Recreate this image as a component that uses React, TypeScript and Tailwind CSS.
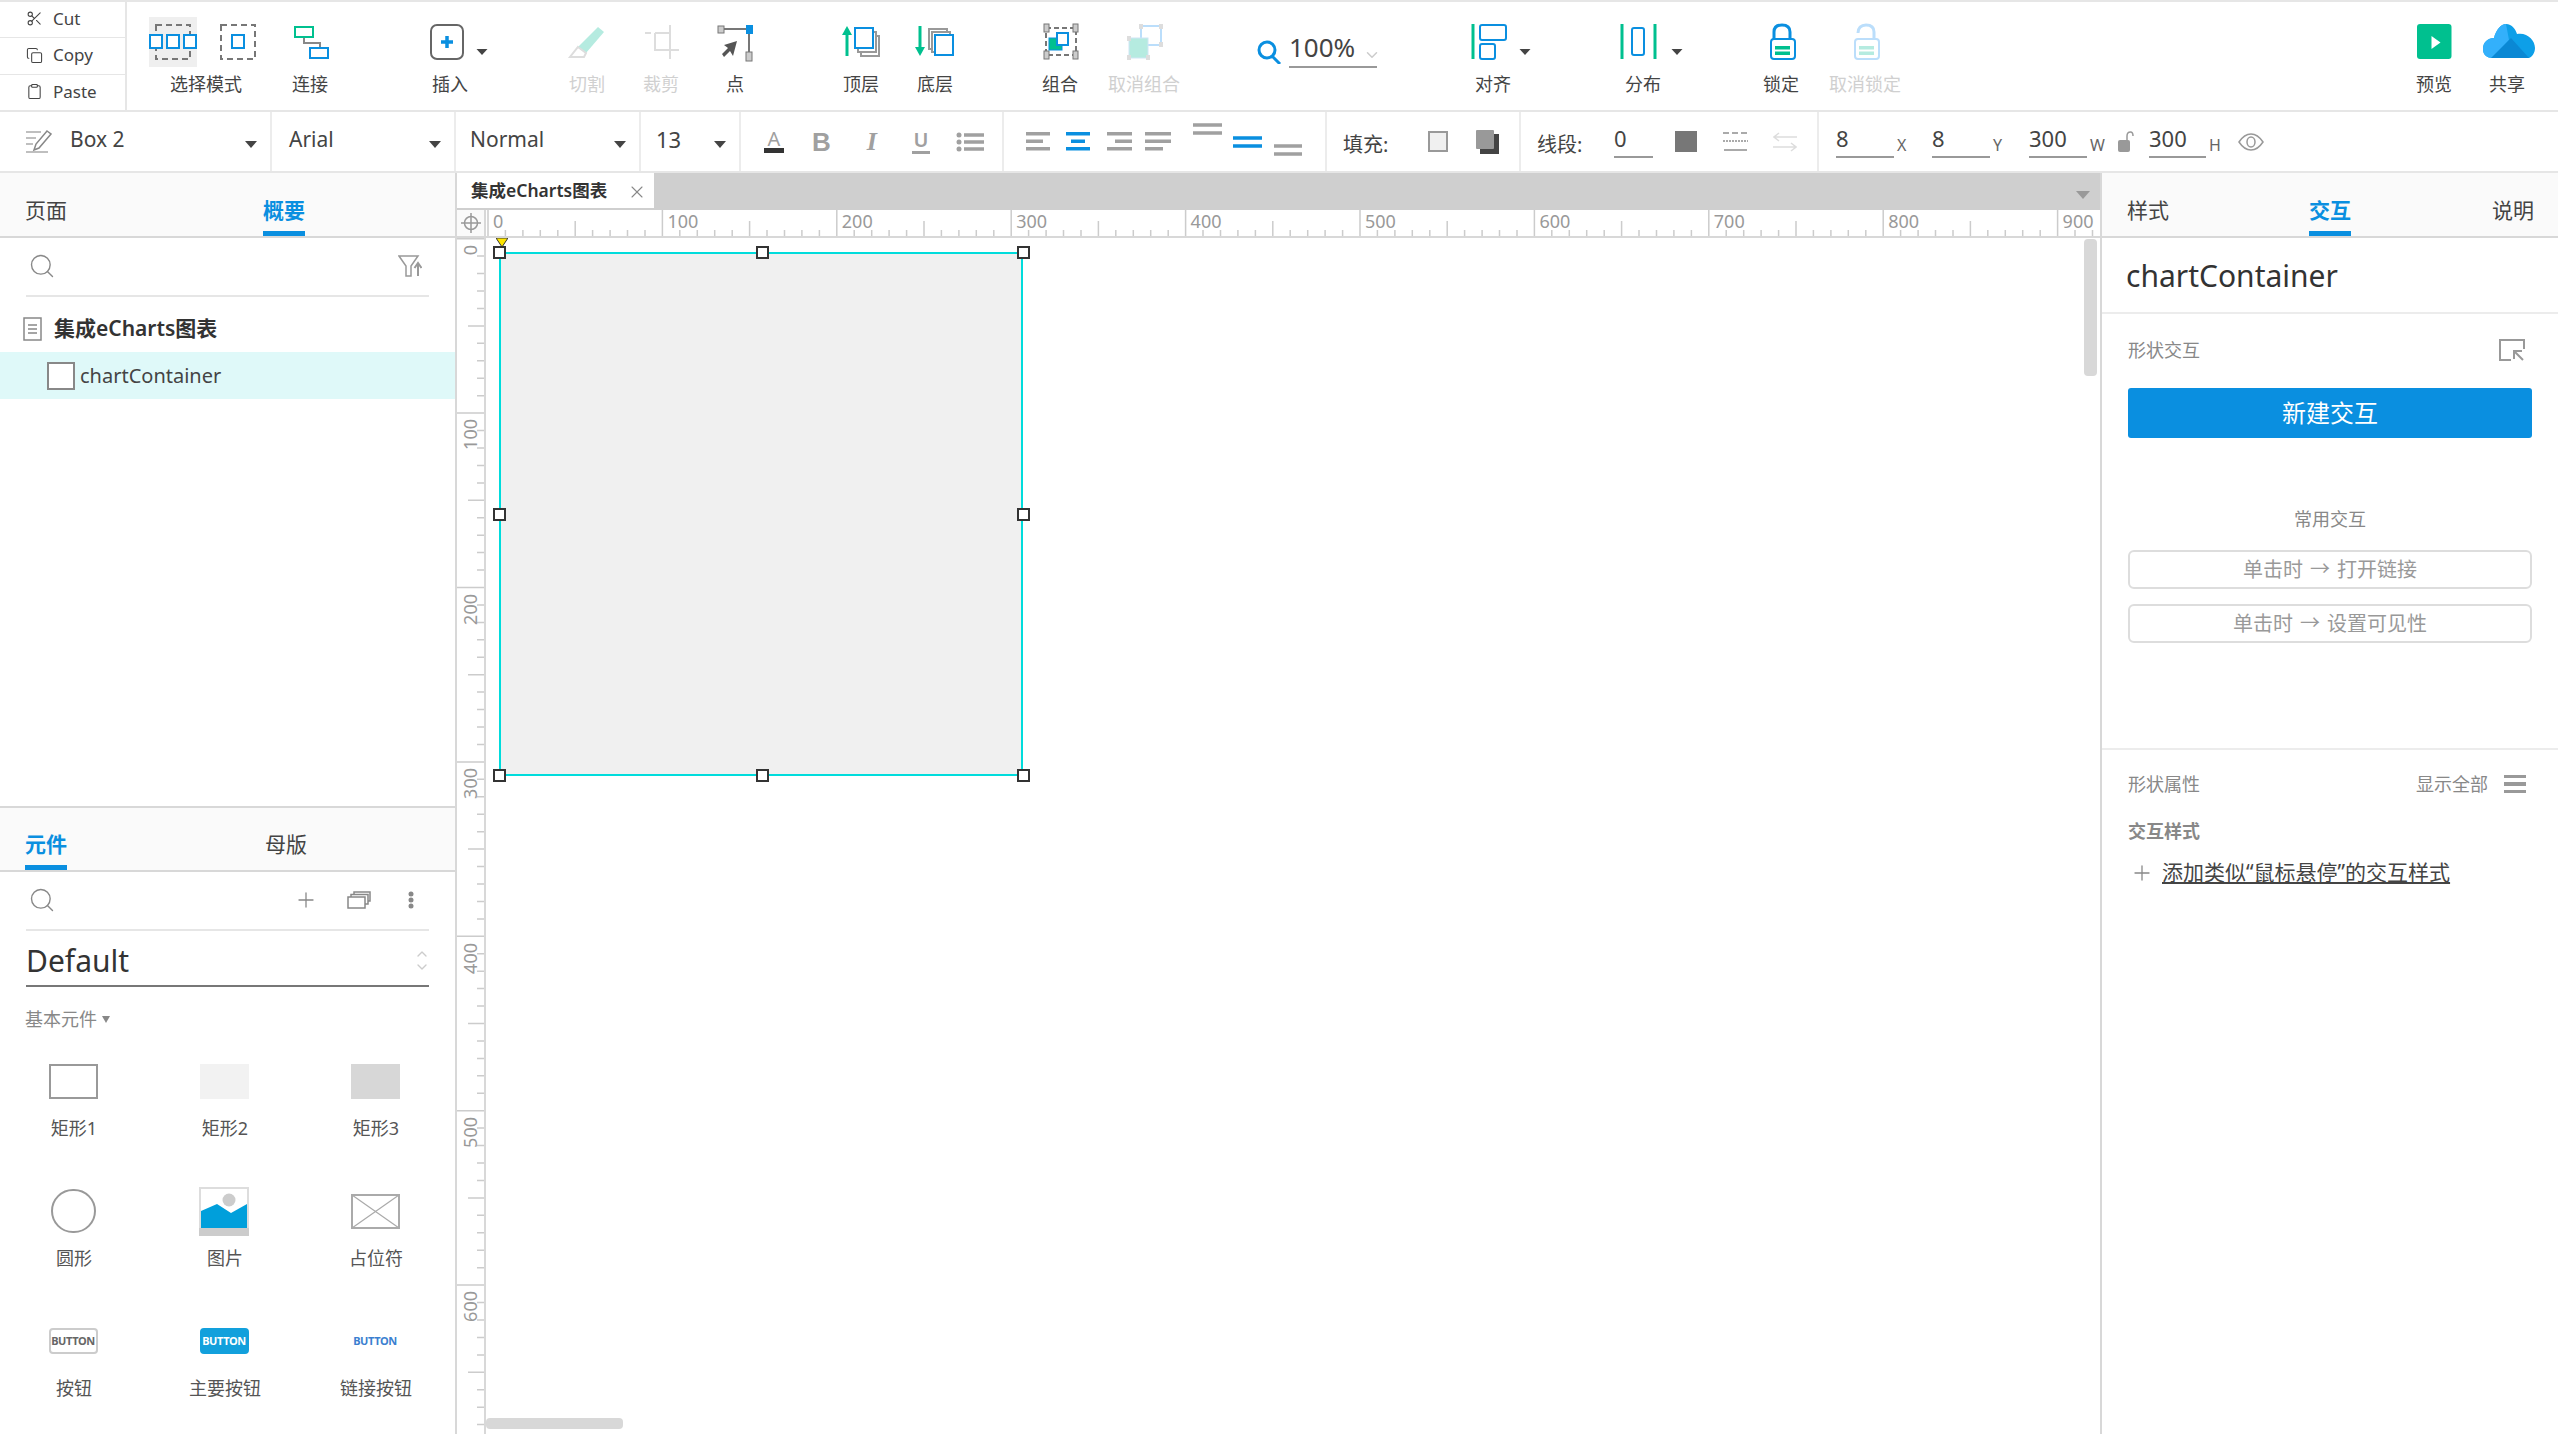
import { ReactNode } from "react";
import { Scissors, Copy, Clipboard, Search, Plus, X, ChevronUp, ChevronDown } from "lucide-react";

const BLUE = "#0a8fe0";
const GREEN = "#00c08f";

const Tri = ({ x, y = 28 }: { x: number; y?: number }) => (
  <polygon points={`${x - 5.5},${y - 3} ${x + 5.5},${y - 3} ${x},${y + 3}`} fill="#444" />
);

const Caret = ({ className = "" }: { className?: string }) => (
  <svg width="12" height="7" viewBox="0 0 12 7" className={className}>
    <polygon points="0,0 12,0 6,7" fill="#444" />
  </svg>
);

function Tool({ icon, label, className, off }: { icon: ReactNode; label: string; className: string; off?: boolean }) {
  return (
    <div className={`flex shrink-0 flex-col items-center pt-[22px] ${className}`}>
      <svg width="72" height="38" viewBox="0 0 72 38" className="overflow-visible">
        {icon}
      </svg>
      <div className={`mt-[10px] whitespace-nowrap text-[18px] leading-[24px] ${off ? "text-[#d0d0d0]" : "text-[#444]"}`}>{label}</div>
    </div>
  );
}

function TopBar() {
  return (
    <div className="flex h-[110px] border-b-2 border-[#e6e6e6] bg-white">
      <div className="flex w-[127px] shrink-0 flex-col border-r-2 border-[#e6e6e6] text-[17px] text-[#444]">
        <div className="flex h-[36px] items-center gap-[10px] border-b border-[#e6e6e6] pb-[2px] pl-[26px]">
          <Scissors size={17} strokeWidth={1.5} />
          Cut
        </div>
        <div className="flex h-[37px] items-center gap-[10px] border-b border-[#e6e6e6] pb-[2px] pl-[26px]">
          <Copy size={17} strokeWidth={1.5} />
          Copy
        </div>
        <div className="flex flex-1 items-center gap-[10px] pb-[2px] pl-[26px]">
          <Clipboard size={17} strokeWidth={1.5} />
          Paste
        </div>
      </div>

      <div className="ml-[22px] flex w-[114px] shrink-0 flex-col pt-[22px]">
        <svg width="106" height="38" viewBox="0 0 106 38" className="overflow-visible">
          <rect x="0" y="-7" width="48" height="50" fill="#efefef" />
          <rect x="7" y="1" width="34" height="34" fill="none" stroke="#777" strokeWidth="2" strokeDasharray="6 4" />
          <rect x="1" y="11" width="12" height="13" fill="#fff" stroke={BLUE} strokeWidth="2" />
          <rect x="18" y="11" width="12" height="13" fill="#fff" stroke={BLUE} strokeWidth="2" />
          <rect x="35" y="11" width="12" height="13" fill="#fff" stroke={BLUE} strokeWidth="2" />
          <rect x="72" y="1" width="34" height="34" fill="none" stroke="#777" strokeWidth="2" strokeDasharray="6 4" />
          <rect x="83" y="11" width="12" height="13" fill="#fff" stroke={BLUE} strokeWidth="2" />
        </svg>
        <div className="mt-[10px] text-center text-[18px] leading-[24px] text-[#444]">选择模式</div>
      </div>

      <Tool
        label="连接"
        className="ml-[11px] w-[72px]"
        icon={
          <>
            <path d="M30 12V19H46V24" fill="none" stroke="#888" strokeWidth="2" />
            <rect x="21" y="3" width="18" height="10" fill="#fff" stroke={GREEN} strokeWidth="2" />
            <rect x="36" y="24" width="18" height="10" fill="#fff" stroke={BLUE} strokeWidth="2" />
          </>
        }
      />
      <Tool
        label="插入"
        className="ml-[68px] w-[72px]"
        icon={
          <>
            <rect x="17" y="1" width="32" height="34" rx="6" fill="none" stroke="#666" strokeWidth="2" />
            <path d="M33 12V24M27 18H39" stroke={BLUE} strokeWidth="3.5" />
            <Tri x={68} />
          </>
        }
      />
      <Tool
        label="切割"
        off
        className="ml-[65px] w-[72px]"
        icon={
          <>
            <polygon points="47,3 53,8 35,29 27,23" fill="#b5ebe0" />
            <polygon points="27,23 35,29 33,33 19,33" fill="#fff" stroke="#ddd" strokeWidth="2" />
          </>
        }
      />
      <Tool
        label="裁剪"
        off
        className="ml-[2px] w-[72px]"
        icon={<path d="M20 9H26M30 9V26H54M30 9H45M45 1V35" fill="none" stroke="#ddd" strokeWidth="2" />}
      />
      <Tool
        label="点"
        className="ml-[2px] w-[72px]"
        icon={
          <>
            <path d="M22 5H50V32" fill="none" stroke="#777" strokeWidth="2" />
            <rect x="19" y="2" width="6" height="7" fill="#ccc" stroke="#777" />
            <rect x="47" y="1" width="7" height="9" fill={BLUE} />
            <rect x="47" y="28" width="6" height="9" fill="#ccc" stroke="#777" />
            <polygon points="38,17 34,32 31,27 25,33 23,30 29,24 25,21" fill="#555" />
          </>
        }
      />
      <Tool
        label="顶层"
        className="ml-[54px] w-[72px]"
        icon={
          <>
            <path d="M22 32V8" stroke={GREEN} strokeWidth="3" />
            <polygon points="17,11 27,11 22,2" fill={GREEN} />
            <rect x="36" y="12" width="18" height="20" fill="#fff" stroke="#999" strokeWidth="2" />
            <rect x="33" y="8" width="18" height="20" fill="#fff" stroke="#999" strokeWidth="2" />
            <rect x="30" y="4" width="18" height="20" fill="#fff" stroke={BLUE} strokeWidth="2" />
          </>
        }
      />
      <Tool
        label="底层"
        className="ml-[2px] w-[72px]"
        icon={
          <>
            <path d="M21 2V26" stroke={GREEN} strokeWidth="3" />
            <polygon points="16,23 26,23 21,32" fill={GREEN} />
            <rect x="30" y="5" width="18" height="20" fill="#fff" stroke="#999" strokeWidth="2" />
            <rect x="33" y="8" width="18" height="20" fill="#fff" stroke="#999" strokeWidth="2" />
            <rect x="36" y="11" width="18" height="20" fill="#fff" stroke={BLUE} strokeWidth="2" />
          </>
        }
      />
      <Tool
        label="组合"
        className="ml-[53px] w-[72px]"
        icon={
          <>
            <rect x="22" y="4" width="30" height="27" fill="none" stroke="#777" strokeWidth="2" strokeDasharray="5 3" />
            <rect x="20" y="0" width="5" height="8" fill="#ccc" stroke="#777" />
            <rect x="49" y="0" width="5" height="8" fill="#ccc" stroke="#777" />
            <rect x="20" y="27" width="5" height="8" fill="#ccc" stroke="#777" />
            <rect x="49" y="27" width="5" height="8" fill="#ccc" stroke="#777" />
            <rect x="25" y="14" width="13" height="12" fill={GREEN} stroke={BLUE} />
            <rect x="33" y="9" width="11" height="12" fill="#fff" stroke={BLUE} strokeWidth="2" />
          </>
        }
      />
      <Tool
        label="取消组合"
        off
        className="ml-[12px] w-[72px]"
        icon={
          <>
            <rect x="33" y="2" width="20" height="19" fill="#fff" stroke="#bbdefb" strokeWidth="2" />
            <rect x="21" y="14" width="19" height="20" fill="#b5ebe0" stroke="#cfe6f5" />
            <rect x="31" y="0" width="4" height="5" fill="#ddd" />
            <rect x="51" y="0" width="4" height="5" fill="#ddd" />
            <rect x="51" y="18" width="4" height="5" fill="#ddd" />
            <rect x="19" y="12" width="4" height="5" fill="#ddd" />
            <rect x="19" y="31" width="4" height="5" fill="#ddd" />
            <rect x="38" y="31" width="4" height="5" fill="#ddd" />
          </>
        }
      />

      <div className="relative ml-[76px] flex h-[108px] w-[121px] shrink-0 items-start pt-[27px]">
        <svg width="26" height="24" viewBox="0 0 26 24" className="mt-[11px]">
          <circle cx="11" cy="10" r="8" fill="none" stroke={BLUE} strokeWidth="3" />
          <path d="M16 16L24 24" stroke={BLUE} strokeWidth="3" />
        </svg>
        <div className="ml-[7px] flex h-[39px] w-[88px] border-b-2 border-[#999] text-[26px] leading-[36px] text-[#444]">100%</div>
        <ChevronDown size={18} strokeWidth={2} className="absolute left-[107px] top-[44px] text-[#ccc]" />
      </div>

      <Tool
        label="对齐"
        className="ml-[80px] w-[72px]"
        icon={
          <>
            <path d="M16 0V35" stroke={GREEN} strokeWidth="3" />
            <rect x="23" y="1" width="26" height="15" rx="2" fill="none" stroke={BLUE} strokeWidth="2" />
            <rect x="23" y="20" width="15" height="15" rx="2" fill="none" stroke={BLUE} strokeWidth="2" />
            <Tri x={68} />
          </>
        }
      />
      <Tool
        label="分布"
        className="ml-[78px] w-[72px]"
        icon={
          <>
            <path d="M15 0V35M48 0V35" stroke={GREEN} strokeWidth="3" />
            <rect x="25" y="4" width="12" height="27" rx="2" fill="none" stroke={BLUE} strokeWidth="2" />
            <Tri x={70} />
          </>
        }
      />
      <Tool
        label="锁定"
        className="ml-[66px] w-[72px]"
        icon={
          <>
            <path d="M29 16V8C29 3 32 1 37 1C42 1 45 3 45 8V16" fill="none" stroke={BLUE} strokeWidth="3" />
            <rect x="26" y="15" width="24" height="20" rx="3" fill="#fff" stroke={BLUE} strokeWidth="2" />
            <rect x="30" y="22" width="15" height="3.5" fill={GREEN} />
            <rect x="30" y="27.5" width="15" height="3.5" fill={GREEN} />
          </>
        }
      />
      <Tool
        label="取消锁定"
        off
        className="ml-[12px] w-[72px]"
        icon={
          <>
            <path d="M29 9C29 4 32 1 37 1C42 1 45 3 45 8V16" fill="none" stroke="#bbdefb" strokeWidth="3" />
            <rect x="26" y="15" width="24" height="20" rx="3" fill="#fff" stroke="#bbdefb" strokeWidth="2" />
            <rect x="30" y="22" width="15" height="3.5" fill="#b5ebe0" />
            <rect x="30" y="27.5" width="15" height="3.5" fill="#b5ebe0" />
          </>
        }
      />

      <Tool
        label="预览"
        className="ml-auto w-[72px]"
        icon={
          <>
            <rect x="19" y="0" width="34.5" height="35" rx="3" fill={GREEN} />
            <polygon points="33.500,12 42.500,18.500 33.500,25" fill="#fff" />
          </>
        }
      />
      <Tool
        label="共享"
        className="ml-[1px] mr-[15px] w-[72px]"
        icon={
          <>
            <path d="M12 25C12 18 17 14 23 14C25 6 30 0 35 0C41 0 45 6 46 10C56 8 64 16 64 24C64 29 61 33 58 34H22C16 34 12 31 12 25Z" fill="#0d9fe8" />
            <path d="M12 25C12 18 17 14 23 14C25 6 30 0 35 0L38 16L22 34C16 34 12 31 12 25Z" fill="#33b0fb" />
            <polygon points="20,34 40,14 58,34" fill="#0a88d4" />
          </>
        }
      />
    </div>
  );
}

const Bars = ({ w, color, mid, midW, lastW }: { w: number; color: string; mid: number; midW: number; lastW?: number }) => (
  <svg width={w} height={19} viewBox={`0 0 ${w} 19`} className="shrink-0">
    <rect x={0} y={0} width={w} height={3.5} fill={color} />
    <rect x={mid} y={7.5} width={midW} height={3.5} fill={color} />
    <rect x={0} y={15} width={lastW ?? w} height={3.5} fill={color} />
  </svg>
);

const Dim = ({ value, tag, w = "w-[58px]", tagW }: { value: string; tag: string; w?: string; tagW: string }) => (
  <div className="flex items-end">
    <div className={`h-[33px] border-b-2 border-[#999] text-[22px] leading-[26px] text-[#444] ${w}`}>{value}</div>
    <div className={`pb-[2px] pl-[3px] text-[16px] leading-[22px] text-[#666] ${tagW}`}>{tag}</div>
  </div>
);

function FormatBar() {
  return (
    <div className="flex h-[61px] border-b-2 border-[#e6e6e6] bg-white text-[20px] text-[#444]">
      <div className="flex w-[272px] shrink-0 items-center border-r-2 border-[#ececec] pl-[26px]">
        <svg width="26" height="24" viewBox="0 0 26 24" fill="none" stroke="#aaa" strokeWidth="1.5">
          <path d="M0 2H15M0 8H10M0 14H7M0 22H22" />
          <path d="M21 1L25 4L13 18L8 20L10 14Z" stroke="#888" />
        </svg>
        <span className="ml-[18px] pb-[4px] text-[21px]">Box 2</span>
        <Caret className="ml-[120px] mt-[5px]" />
      </div>
      <div className="flex w-[184px] shrink-0 items-center border-r-2 border-[#ececec] pl-[17px]">
        <span className="w-[141px] pb-[4px] text-[21px]">Arial</span>
        <Caret className="mt-[5px] -ml-[1px]" />
      </div>
      <div className="flex w-[185px] shrink-0 items-center border-r-2 border-[#ececec] pl-[14px]">
        <span className="w-[147px] pb-[4px] text-[21px]">Normal</span>
        <Caret className="mt-[5px] -ml-[3px]" />
      </div>
      <div className="flex w-[100px] shrink-0 items-center border-r-2 border-[#ececec] pl-[15px]">
        <span className="w-[58px] pb-[4px] text-[22px]">13</span>
        <Caret className="mt-[5px]" />
      </div>

      <div className="flex w-[263px] shrink-0 items-center border-r-2 border-[#ececec] pl-[23px] text-[#a0a0a0]">
        <div className="flex w-[20px] flex-col items-center">
          <span className="text-[20px] leading-[18px]">A</span>
          <div className="h-[5px] w-[20px] bg-[#333]" />
        </div>
        <b className="ml-[28px] font-['Liberation_Sans',sans-serif] text-[26px] leading-[26px]">B</b>
        <b className="ml-[36px] font-['Liberation_Serif',serif] text-[26px] italic leading-[26px]">I</b>
        <div className="ml-[35px] flex w-[18px] flex-col items-center">
          <span className="text-[20px] font-semibold leading-[20px]">U</span>
          <div className="mt-[1px] h-[3px] w-[18px] bg-[#a0a0a0]" />
        </div>
        <svg width="28" height="20" viewBox="0 0 28 20" className="ml-[26px]">
          <path d="M8 3H28M8 10H28M8 17H28" stroke="#a0a0a0" strokeWidth="3.5" />
          <circle cx="3" cy="3" r="2.5" fill="#a0a0a0" />
          <circle cx="3" cy="10" r="2.5" fill="#a0a0a0" />
          <circle cx="3" cy="17" r="2.5" fill="#a0a0a0" />
        </svg>
      </div>

      <div className="flex w-[323px] shrink-0 items-center border-r-2 border-[#ececec] pl-[22px]">
        <Bars w={24} color="#a0a0a0" mid={0} midW={17} />
        <div className="ml-[16px]">
          <Bars w={24} color={BLUE} mid={5} midW={14} />
        </div>
        <div className="ml-[17px]">
          <Bars w={25} color="#a0a0a0" mid={8} midW={17} />
        </div>
        <div className="ml-[13px]">
          <Bars w={26} color="#a0a0a0" mid={0} midW={26} lastW={18} />
        </div>
        <svg width="29" height="27" viewBox="0 0 29 27" className="ml-[22px] mb-[11px] shrink-0">
          <path d="M0 2H29M0 10H29" stroke="#a0a0a0" strokeWidth="3.5" />
        </svg>
        <svg width="29" height="12" viewBox="0 0 29 12" className="ml-[11px] shrink-0">
          <path d="M0 2H29M0 10H29" stroke={BLUE} strokeWidth="3.5" />
        </svg>
        <svg width="28" height="12" viewBox="0 0 28 12" className="ml-[12px] mt-[16px] shrink-0">
          <path d="M0 2H28M0 10H28" stroke="#a0a0a0" strokeWidth="3.5" />
        </svg>
      </div>

      <div className="flex w-[194px] shrink-0 items-center border-r-2 border-[#ececec] pl-[16px]">
        <span className="w-[85px] pt-[6px]">填充:</span>
        <div className="h-[21px] w-[20px] border-2 border-[#999] bg-[#f0f0f0]" />
        <svg width="23" height="24" viewBox="0 0 23 24" className="ml-[28px]">
          <rect x="4" y="4" width="19" height="20" fill="#444" />
          <rect x="0" y="0" width="18" height="19" rx="1" fill="#999" />
        </svg>
      </div>

      <div className="flex w-[298px] shrink-0 items-center border-r-2 border-[#ececec] pl-[16px]">
        <span className="w-[77px] pt-[6px]">线段:</span>
        <div className="h-[33px] w-[39px] border-b-2 border-[#999] text-[22px] leading-[26px]">0</div>
        <div className="ml-[22px] h-[21px] w-[22px] bg-[#777]" />
        <svg width="25" height="20" viewBox="0 0 25 20" fill="none" className="ml-[26px]">
          <path d="M0 1H25" stroke="#aaa" strokeWidth="2" strokeDasharray="6 3" />
          <path d="M0 9H25" stroke="#aaa" strokeWidth="2" strokeDasharray="2 1" />
          <path d="M1 18H24" stroke="#aaa" strokeWidth="2" />
        </svg>
        <svg width="24" height="20" viewBox="0 0 24 20" fill="none" stroke="#ddd" strokeWidth="1.5" className="ml-[25px]">
          <path d="M24 5H1M6 1L1 5L6 9" />
          <path d="M0 15H23M18 11L23 15L18 19" />
        </svg>
      </div>

      <div className="flex flex-1 items-center pl-[17px]">
        <Dim value="8" tag="X" tagW="w-[38px]" />
        <Dim value="8" tag="Y" tagW="w-[39px]" />
        <Dim value="300" tag="W" tagW="w-[31px]" />
        <svg width="16" height="21" viewBox="0 0 16 21" className="shrink-0">
          <rect x="0" y="9" width="12" height="12" rx="2" fill="#999" />
          <path d="M9 9V5C9 2 11 1 12.500 1C14 1 15 3 15 5" fill="none" stroke="#999" strokeWidth="1.5" />
        </svg>
        <div className="w-[15px] shrink-0" />
        <Dim value="300" tag="H" w="w-[57px]" tagW="w-[32px]" />
        <svg width="26" height="18" viewBox="0 0 26 18" fill="none" stroke="#999" strokeWidth="1.5">
          <path d="M1 9C5 3 9 1 13 1C17 1 21 3 25 9C21 15 17 17 13 17C9 17 5 15 1 9Z" />
          <ellipse cx="13" cy="9" rx="4" ry="5" />
        </svg>
      </div>
    </div>
  );
}

const PanelTab = ({ label, active, className = "" }: { label: string; active?: boolean; className?: string }) => (
  <div
    className={`flex h-full items-center border-b-[5px] pt-[17px] text-[21px] ${
      active ? "border-[#0a8fe0] font-semibold text-[#0a8fe0]" : "border-transparent text-[#444]"
    } ${className}`}
  >
    {label}
  </div>
);

const Thin = () => <Search size={28} strokeWidth={1.2} className="text-[#888]" />;

function ShapeCell({ label, children }: { label: string; children: ReactNode }) {
  return (
    <div className="flex h-[130px] flex-col items-center">
      <div className="flex h-[50px] items-center justify-center">{children}</div>
      <div className="mt-[10px] pl-[2px] text-[18px] leading-[24px] text-[#555]">{label}</div>
    </div>
  );
}

const BtnIcon = ({ bg, fg, border }: { bg: string; fg: string; border: string }) => (
  <div className={`flex h-[26px] w-[49px] items-center justify-center rounded-[4px] border-2 text-[11px] font-bold tracking-[-0.4px] ${bg} ${fg} ${border}`}>BUTTON</div>
);

function LeftPanel() {
  return (
    <div className="flex w-[457px] shrink-0 flex-col border-r-2 border-[#d8d8d8] bg-white">
      <div className="flex h-[65px] shrink-0 border-b-2 border-[#d8d8d8] bg-[#fafafa] pl-[25px]">
        <PanelTab label="页面" />
        <PanelTab label="概要" active className="ml-[196px]" />
      </div>
      <div className="mx-[26px] flex h-[59px] shrink-0 items-center justify-between border-b-2 border-[#e6e6e6] pb-[2px] pl-[2px]">
        <Thin />
        <svg width="24" height="24" viewBox="0 0 24 24" fill="none" stroke="#999" strokeWidth="1.5" className="mr-[7px]">
          <path d="M1 2H20L13 12V22H8V12Z" />
          <path d="M20 22V10M16.500 14L20 9L23.500 14" strokeWidth="2" />
        </svg>
      </div>
      <div className="mt-[19px] flex h-[26px] items-center pl-[23px]">
        <svg width="19" height="24" viewBox="0 0 19 24" fill="none" stroke="#888" strokeWidth="1.5">
          <rect x="1" y="1" width="17" height="22" />
          <path d="M5 8H14M5 12H14M5 16H14" />
        </svg>
        <span className="ml-[12px] text-[21px] font-semibold text-[#333]">集成eCharts图表</span>
      </div>
      <div className="mt-[10px] flex h-[47px] items-center bg-[#dff9f9] pl-[47px]">
        <div className="h-[28px] w-[28px] border-2 border-[#888] bg-white" />
        <span className="ml-[5px] text-[20px] text-[#444]">chartContainer</span>
      </div>

      <div className="mt-auto flex h-[628px] shrink-0 flex-col border-t-2 border-[#d8d8d8]">
        <div className="flex h-[64px] shrink-0 border-b-2 border-[#d8d8d8] bg-[#fafafa] pl-[25px]">
          <PanelTab label="元件" active />
          <PanelTab label="母版" className="ml-[198px]" />
        </div>
        <div className="mx-[26px] flex h-[59px] shrink-0 items-center border-b-2 border-[#e6e6e6] pb-[2px] pl-[2px]">
          <Thin />
          <Plus size={24} strokeWidth={1.3} className="ml-[238px] text-[#888]" />
          <svg width="24" height="18" viewBox="0 0 24 18" fill="none" stroke="#888" strokeWidth="1.5" className="ml-[29px]">
            <rect x="1" y="6" width="17" height="11" />
            <path d="M4 6V3.500H21V13H18" />
            <path d="M7 3V1H23V10H21" />
          </svg>
          <svg width="6" height="18" viewBox="0 0 6 18" className="ml-[37px]">
            <circle cx="3" cy="3" r="2.500" fill="#888" />
            <circle cx="3" cy="9" r="2.500" fill="#888" />
            <circle cx="3" cy="15" r="2.500" fill="#888" />
          </svg>
        </div>
        <div className="mx-[26px] flex h-[56px] shrink-0 items-center justify-between border-b-2 border-[#777] pt-[4px]">
          <span className="text-[30px] text-[#333]">Default</span>
          <div className="mr-[-1px] flex flex-col items-center text-[#ccc]">
            <ChevronUp size={16} strokeWidth={2} className="-mb-[3px]" />
            <ChevronDown size={16} strokeWidth={2} />
          </div>
        </div>
        <div className="ml-[25px] mt-[20px] flex h-[24px] items-center text-[18px] text-[#888]">
          基本元件
          <svg width="8" height="7" viewBox="0 0 8 7" className="ml-[5px]">
            <polygon points="0,0 8,0 4,7" fill="#888" />
          </svg>
        </div>
        <div className="mt-[25px] grid grid-cols-[146px_156px_146px]">
          <ShapeCell label="矩形1">
            <div className="h-[35px] w-[49px] border-2 border-[#999] bg-white" />
          </ShapeCell>
          <ShapeCell label="矩形2">
            <div className="h-[35px] w-[49px] bg-[#f2f2f2]" />
          </ShapeCell>
          <ShapeCell label="矩形3">
            <div className="h-[35px] w-[49px] bg-[#d7d7d7]" />
          </ShapeCell>
          <ShapeCell label="圆形">
            <div className="h-[44px] w-[45px] rounded-full border-2 border-[#999] bg-white" />
          </ShapeCell>
          <ShapeCell label="图片">
            <svg width="50" height="49" viewBox="0 0 50 49">
              <rect width="50" height="49" fill="#ddd" />
              <rect x="2" y="2" width="46" height="45" fill="#fff" />
              <rect y="41" width="50" height="8" fill="#ccc" />
              <polygon points="2,41 2,24 18,17 32,26 48,17 48,41" fill="#009fdb" />
              <circle cx="30" cy="13" r="6.500" fill="#ccc" />
            </svg>
          </ShapeCell>
          <ShapeCell label="占位符">
            <svg width="49" height="35" viewBox="0 0 49 35" fill="none" stroke="#aaa">
              <rect x="1" y="1" width="47" height="33" strokeWidth="2" />
              <path d="M1 1L48 34M48 1L1 34" strokeWidth="1.2" />
            </svg>
          </ShapeCell>
          <ShapeCell label="按钮">
            <BtnIcon bg="bg-white" fg="text-[#666]" border="border-[#ccc]" />
          </ShapeCell>
          <ShapeCell label="主要按钮">
            <BtnIcon bg="bg-[#12a0dc]" fg="text-white" border="border-[#12a0dc]" />
          </ShapeCell>
          <ShapeCell label="链接按钮">
            <BtnIcon bg="bg-white" fg="text-[#3b7fd0]" border="border-white" />
          </ShapeCell>
        </div>
      </div>
    </div>
  );
}

const UNIT = 17.44;

function hTicks() {
  let d = "";
  for (let i = 0; i <= 92; i++) {
    const x = 2 + i * UNIT;
    const len = i % 10 === 0 ? 26 : i % 5 === 0 ? 15 : 6;
    d += `M${x.toFixed(1)} 26V${26 - len}`;
  }
  return d;
}

function vTicks() {
  let d = "";
  for (let i = 0; i <= 70; i++) {
    const y = 0.7 + i * UNIT;
    const len = i % 10 === 0 ? 27 : i % 5 === 0 ? 16 : 7;
    d += `M27 ${y.toFixed(1)}H${27 - len}`;
  }
  return d;
}

const Handle = ({ className }: { className: string }) => (
  <div className={`absolute h-[13px] w-[13px] border-2 border-[#333] bg-white ${className}`} />
);

function Center() {
  return (
    <div className="flex min-w-0 flex-1 flex-col bg-white">
      <div className="relative flex h-[37px] shrink-0 bg-[#cfcfcf] pb-[2px]">
        <div className="flex w-[197px] items-center bg-white pl-[14px] text-[17.500px] text-[#333]">
          <span className="font-semibold">集成eCharts图表</span>
          <X size={20} strokeWidth={1.3} className="ml-[20px] mt-[2px] text-[#888]" />
        </div>
        <svg width="14" height="8" viewBox="0 0 14 8" className="absolute right-[10px] top-[18px]">
          <polygon points="0,0 14,0 7,8" fill="#999" />
        </svg>
      </div>

      <div className="flex h-[28px] shrink-0 border-b-2 border-[#d8d8d8]">
        <div className="flex w-[27px] items-center justify-center bg-[#fafafa]">
          <svg width="20" height="20" viewBox="0 0 20 20" fill="none" stroke="#999" strokeWidth="1.5">
            <circle cx="10" cy="10" r="6.500" />
            <path d="M10 0V20M0 10H20" />
          </svg>
        </div>
        <div className="w-[2px] bg-[#d8d8d8]" />
        <div className="relative flex-1 overflow-hidden">
          <svg width="1614" height="26" viewBox="0 0 1614 26" className="absolute left-0 top-0">
            <path d={hTicks()} stroke="#ccc" strokeWidth="1.500" fill="none" />
          </svg>
          {[0, 100, 200, 300, 400, 500, 600, 700, 800, 900].map((n) => (
            <span
              key={n}
              className="absolute -top-[2px] text-[18px] leading-[26px] text-[#999]"
              style={{ left: 7 + (n / 10) * UNIT }}
            >
              {n}
            </span>
          ))}
        </div>
      </div>

      <div className="flex min-h-0 flex-1">
        <div className="relative w-[29px] shrink-0 overflow-hidden border-r-2 border-[#d8d8d8]">
          <svg width="27" height="1200" viewBox="0 0 27 1200" className="absolute left-0 top-0">
            <path d={vTicks()} stroke="#ccc" strokeWidth="1.500" fill="none" />
          </svg>
          {[0, 100, 200, 300, 400, 500, 600].map((n) => (
            <span
              key={n}
              className="absolute left-[1px] rotate-180 text-[18px] leading-[24px] text-[#999] [writing-mode:vertical-rl]"
              style={{ top: 7 + (n / 10) * UNIT }}
            >
              {n}
            </span>
          ))}
        </div>

        <div className="relative flex-1 overflow-hidden">
          <svg width="12" height="9" viewBox="0 0 12 9" className="absolute left-[10px] top-0">
            <polygon points="0,0 12,0 6,9" fill="#ffe600" stroke="#333" />
          </svg>
          <div className="absolute left-[13px] top-[14px] h-[524px] w-[524px] border-2 border-[#00dcdc] bg-[#f0f0f0]" />
          <Handle className="left-[7px] top-[8px]" />
          <Handle className="left-[270px] top-[8px]" />
          <Handle className="left-[531px] top-[8px]" />
          <Handle className="left-[7px] top-[270px]" />
          <Handle className="left-[531px] top-[270px]" />
          <Handle className="left-[7px] top-[531px]" />
          <Handle className="left-[270px] top-[531px]" />
          <Handle className="left-[531px] top-[531px]" />
          <div className="absolute right-[3px] top-[1px] h-[137px] w-[13px] rounded-[4px] bg-[#d8d8d8]" />
          <div className="absolute bottom-[5px] left-0 h-[11px] w-[137px] rounded-[4px] bg-[#d8d8d8]" />
        </div>
      </div>
    </div>
  );
}

const ActionBtn = ({ left, right }: { left: string; right: string }) => (
  <div className="flex h-[39px] items-center justify-center rounded-[6px] border-2 border-[#ddd] text-[20px] text-[#999]">
    {left}
    <span className="mx-[7px] -mt-[3px] font-['Noto_Sans_CJK_SC',sans-serif]">→</span>
    {right}
  </div>
);

function RightPanel() {
  return (
    <div className="flex w-[458px] shrink-0 flex-col border-l-2 border-[#d8d8d8] bg-white">
      <div className="flex h-[65px] shrink-0 justify-between border-b-2 border-[#d8d8d8] bg-[#fafafa] pl-[25px] pr-[24px]">
        <PanelTab label="样式" />
        <PanelTab label="交互" active className="ml-[-1px]" />
        <PanelTab label="说明" />
      </div>
      <div className="flex h-[76px] shrink-0 items-center border-b-2 border-[#ececec] pl-[24px] text-[30px] text-[#333]">
        chartContainer
      </div>
      <div className="px-[26px]">
        <div className="mt-[23px] flex h-[26px] items-center justify-between text-[18px] text-[#888]">
          形状交互
          <svg width="26" height="22" viewBox="0 0 26 22" fill="none" stroke="#999" strokeWidth="2" className="mr-[7px]">
            <path d="M25 10V1H1V21H12" />
            <path d="M24 21L16 13M15 20V12H23" />
          </svg>
        </div>
        <div className="mt-[25px] flex h-[50px] items-center justify-center rounded-[3px] bg-[#0a8fe0] text-[24px] text-white">新建交互</div>
        <div className="mt-[69px] text-center text-[18px] leading-[24px] text-[#888]">常用交互</div>
        <div className="mt-[19px] flex flex-col gap-[15px]">
          <ActionBtn left="单击时" right="打开链接" />
          <ActionBtn left="单击时" right="设置可见性" />
        </div>
      </div>
      <div className="mt-[105px] border-t-2 border-[#ececec] px-[26px]">
        <div className="mt-[21px] flex h-[26px] items-center justify-between text-[18px] text-[#888]">
          形状属性
          <div className="flex items-center">
            显示全部
            <div className="ml-[16px] mr-[6px] flex w-[22px] flex-col gap-[4px]">
              <div className="h-[3.500px] bg-[#999]" />
              <div className="h-[3.500px] bg-[#999]" />
              <div className="h-[3.500px] bg-[#999]" />
            </div>
          </div>
        </div>
        <div className="mt-[21px] text-[18px] font-bold leading-[26px] text-[#888]">交互样式</div>
        <div className="mt-[13px] flex items-center">
          <Plus size={24} strokeWidth={1.3} className="ml-[2px] text-[#888]" />
          <span className="ml-[8px] text-[21px] text-[#444] underline">添加类似“鼠标悬停”的交互样式</span>
        </div>
      </div>
    </div>
  );
}

export default function App() {
  return (
    <div className="flex h-[1434px] w-[2558px] flex-col overflow-hidden bg-white pt-[2px] font-['Noto_Sans','Noto_Sans_CJK_SC',sans-serif] [background-image:linear-gradient(#e6e6e6_2px,transparent_2px)]">
      <TopBar />
      <FormatBar />
      <div className="flex min-h-0 flex-1">
        <LeftPanel />
        <Center />
        <RightPanel />
      </div>
    </div>
  );
}
